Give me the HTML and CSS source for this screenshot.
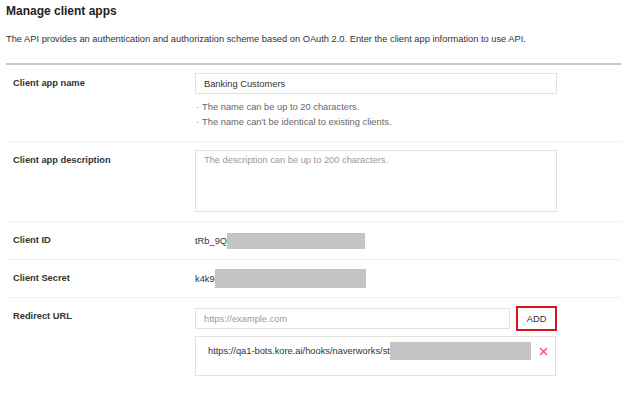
FILE: index.html
```html
<!DOCTYPE html>
<html lang="en">
<head>
    <meta charset="UTF-8">
    <meta name="viewport" content="width=device-width, initial-scale=1.0">
    <title>Manage client apps</title>
    <link rel="stylesheet" href="styles.css">
</head>
<body>
    <div class="page">
        <h1 class="title">Manage client apps</h1>
        <p class="intro">The API provides an authentication and authorization scheme based on OAuth 2.0. Enter the client app information to use API.</p>

        <div class="app-form">
            <div class="form-row">
                <div class="row-label">Client app name</div>
                <div class="row-field">
                    <input type="text" class="text-input" value="Banking Customers">
                    <ul class="hints">
                        <li>The name can be up to 20 characters.</li>
                        <li>The name can't be identical to existing clients.</li>
                    </ul>
                </div>
            </div>

            <div class="form-row">
                <div class="row-label">Client app description</div>
                <div class="row-field">
                    <textarea class="text-area" placeholder="The description can be up to 200 characters."></textarea>
                </div>
            </div>

            <div class="form-row value-row">
                <div class="row-label">Client ID</div>
                <div class="row-field value-line">
                    <span>tRb_9Q</span><span class="masked masked-id"></span>
                </div>
            </div>

            <div class="form-row value-row">
                <div class="row-label">Client Secret</div>
                <div class="row-field value-line">
                    <span>k4k9</span><span class="masked masked-secret"></span>
                </div>
            </div>

            <div class="form-row last-row">
                <div class="row-label">Redirect URL</div>
                <div class="row-field">
                    <div class="url-add">
                        <input type="text" class="text-input url-input" placeholder="https://example.com">
                        <button class="add-btn">ADD</button>
                    </div>
                    <div class="url-list">
                        <div class="url-item">
                            <span class="url-text">https://qa1-bots.kore.ai/hooks/naverworks/st</span><span class="masked masked-url"></span>
                            <button class="remove-btn" aria-label="Remove">
                                <svg width="9" height="9" viewBox="0 0 9 9"><path d="M1 1L8 8M8 1L1 8" stroke="#e8574f" stroke-width="1.3" fill="none"/></svg>
                            </button>
                        </div>
                    </div>
                </div>
            </div>
        </div>
    </div>
</body>
</html>
```

FILE: styles.css
```css
body {
    font-family: "Liberation Sans", Arial, sans-serif;
    margin: 0;
    background-color: white;
    color: #333;
    font-size: 9.3px;
}

.page {
    padding: 0 3px 0 6px;
}

.title {
    font-size: 12px;
    font-weight: bold;
    margin: 0;
    padding-top: 3px;
    line-height: 17px;
    color: #222;
}

.intro {
    margin: 12px 0 0 0;
    line-height: 14px;
    color: #333;
}

.app-form {
    margin-top: 17px;
    border-top: 2px solid #c6c6c6;
}

.form-row {
    display: grid;
    grid-template-columns: 182px 362px;
    padding: 8px 0 9px 7px;
    border-bottom: 1px solid #efefef;
}

.value-row {
    padding-bottom: 8px;
}

.last-row {
    border-bottom: none;
}

.row-label {
    font-weight: bold;
    line-height: 21px;
    color: #333;
}

.text-input {
    display: block;
    box-sizing: border-box;
    width: 100%;
    height: 21px;
    border: 1px solid #e2e2e2;
    padding: 0 8px;
    font-family: inherit;
    font-size: 9.3px;
    color: #333;
    outline: none;
}

.text-input::placeholder,
.text-area::placeholder {
    color: #9a9a9a;
}

.hints {
    list-style: none;
    margin: 6px 0 2px 0;
    padding: 0;
    color: #666;
}

.hints li {
    line-height: 15px;
}

.hints li::before {
    content: "\00B7";
    margin: 0 3px 0 1px;
    color: #888;
}

.text-area {
    display: block;
    box-sizing: border-box;
    width: 100%;
    height: 62px;
    border: 1px solid #e2e2e2;
    padding: 4px 8px;
    font-family: inherit;
    font-size: 9.3px;
    resize: none;
    outline: none;
}

.value-line {
    display: flex;
    align-items: center;
    height: 21px;
}

.masked {
    display: inline-block;
    flex-shrink: 0;
    background-color: #c4c4c4;
}

.masked-id {
    width: 138px;
    height: 16px;
}

.masked-secret {
    width: 151px;
    height: 19px;
}

.url-add {
    display: flex;
    align-items: center;
    gap: 6px;
}

.url-input {
    width: 317px;
}

.add-btn {
    box-sizing: border-box;
    width: 41px;
    height: 25px;
    border: 2px solid #d8121f;
    background-color: white;
    color: #333;
    font-family: inherit;
    font-size: 9.3px;
    padding: 0;
}

.url-list {
    margin-top: 5px;
    width: 361px;
    box-sizing: border-box;
    border: 1px solid #e2e2e2;
    height: 40px;
    padding: 5px 7px 0 12px;
}

.url-item {
    display: flex;
    align-items: center;
}

.url-text {
    white-space: nowrap;
}

.masked-url {
    width: 141px;
    height: 18px;
}

.remove-btn {
    margin-left: auto;
    border: none;
    background: none;
    padding: 0;
    display: flex;
}
```
